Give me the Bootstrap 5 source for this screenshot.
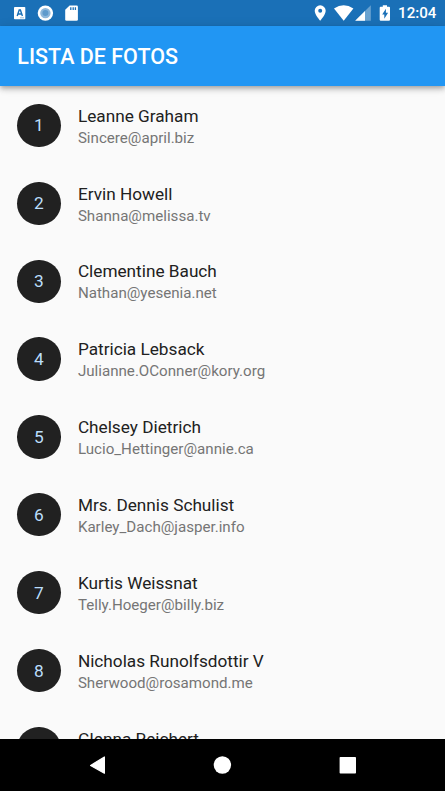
<!DOCTYPE html>
<html lang="es">
<head>
<meta charset="utf-8">
<meta name="viewport" content="width=device-width, initial-scale=1">
<title>Lista de fotos</title>
<link href="https://cdn.jsdelivr.net/npm/bootstrap@5.3.0/dist/css/bootstrap.min.css" rel="stylesheet">
<style>
body{font-family:Roboto,sans-serif;background:#fafafa;color:#212121}
.status-bar{height:26px;background:#1a70b7;color:#fff}
.status-bar svg,.sys-nav svg{display:block;width:100%;height:100%}
.clock{font-size:15.14px;font-weight:500;line-height:27px;padding-right:8.6px}
.app-bar{height:60px;background:#2196f3;padding:2px 17.3px 0;box-shadow:0 2px 4px -1px rgba(0,0,0,.2),0 4px 5px rgba(0,0,0,.14),0 1px 10px rgba(0,0,0,.12);z-index:2}
.app-bar h1{font-size:21.5px;font-weight:500;line-height:26px}
.people{min-height:0;padding-top:.5px}
.person{height:77.88px;padding:0 17.3px;gap:17.3px}
.person-text{padding-top:2.6px}
.avatar{width:43.3px;height:43.3px;padding-top:2px;background:#212121;color:#bbdefb;font-size:17.3px}
.person-name{font-size:17.22px;line-height:22px}
.person-mail{font-size:15.14px;line-height:22px;color:#757575}
.sys-nav{height:52px;background:#000}
</style>
<script src="https://cdn.jsdelivr.net/npm/bootstrap@5.3.0/dist/js/bootstrap.bundle.min.js"></script>
</head>
<body class="vh-100 d-flex flex-column overflow-hidden">
<div class="status-bar flex-shrink-0 position-relative">
<svg viewBox="0 0 445 26" fill="#fff" aria-hidden="true">
<rect x="14" y="7" width="11.3" height="12.3" rx=".8"/>
<path d="M17.2 16l2-6h1.2l2 6M18 14h3.6" fill="none" stroke="#1a70b7" stroke-width="1.4"/>
<path d="M20 17.8h4" stroke="#1a70b7" stroke-width=".6" opacity=".7"/>
<circle cx="45.4" cy="13.1" r="7.7"/><circle cx="45.4" cy="13.1" r="5.2" fill="#8db7db"/><circle cx="45.4" cy="13.1" r="3" fill="#5e9acc"/>
<path d="M69.6 5.4h7q1.3 0 1.3 1.3v12.8q0 1.3-1.3 1.3H66.5q-1.3 0-1.3-1.3V9.7z"/>
<path d="M70.8 7.2v2.7M73.2 7.2v2.7M75.4 7.2v2.7" stroke="#1a70b7" stroke-width="1.3"/>
<path fill-rule="evenodd" d="M320.2 5.3a5.5 5.5 0 0 0-5.5 5.5c0 4.1 5.5 9.9 5.5 9.9s5.5-5.8 5.5-9.9a5.5 5.5 0 0 0-5.5-5.5zm0 3.5a2 2 0 1 1 0 4 2 2 0 0 1 0-4z"/>
<path d="M334 8.6q9.7-6.8 19.4 0L343.7 20.7z"/>
<path d="M370.8 5.2v15.6h-15.6z" opacity=".35"/><path d="M365 11v9.8h-9.8z"/>
<path fill-rule="evenodd" d="M380.7 6.7h2.1V5.2h4.2v1.5h2q1 0 1 1v12.1q0 1-1 1h-8.3q-1 0-1-1V7.7q0-1 1-1zM385.9 8.7l-3.7 5.8h2.1v4.2l3.8-6h-2.2z"/>
</svg>
<span class="clock position-absolute top-0 end-0">12:04</span>
</div>
<header class="app-bar flex-shrink-0 d-flex align-items-center position-relative text-white"><h1 class="m-0">LISTA DE FOTOS</h1></header>
<main class="people flex-grow-1 overflow-hidden">
<ul class="list-unstyled m-0">
<li class="person d-flex align-items-center"><div class="avatar rounded-circle flex-shrink-0 d-flex align-items-center justify-content-center">1</div><div class="person-text"><div class="person-name">Leanne Graham</div><div class="person-mail">Sincere@april.biz</div></div></li>
<li class="person d-flex align-items-center"><div class="avatar rounded-circle flex-shrink-0 d-flex align-items-center justify-content-center">2</div><div class="person-text"><div class="person-name">Ervin Howell</div><div class="person-mail">Shanna@melissa.tv</div></div></li>
<li class="person d-flex align-items-center"><div class="avatar rounded-circle flex-shrink-0 d-flex align-items-center justify-content-center">3</div><div class="person-text"><div class="person-name">Clementine Bauch</div><div class="person-mail">Nathan@yesenia.net</div></div></li>
<li class="person d-flex align-items-center"><div class="avatar rounded-circle flex-shrink-0 d-flex align-items-center justify-content-center">4</div><div class="person-text"><div class="person-name">Patricia Lebsack</div><div class="person-mail">Julianne.OConner@kory.org</div></div></li>
<li class="person d-flex align-items-center"><div class="avatar rounded-circle flex-shrink-0 d-flex align-items-center justify-content-center">5</div><div class="person-text"><div class="person-name">Chelsey Dietrich</div><div class="person-mail">Lucio_Hettinger@annie.ca</div></div></li>
<li class="person d-flex align-items-center"><div class="avatar rounded-circle flex-shrink-0 d-flex align-items-center justify-content-center">6</div><div class="person-text"><div class="person-name">Mrs. Dennis Schulist</div><div class="person-mail">Karley_Dach@jasper.info</div></div></li>
<li class="person d-flex align-items-center"><div class="avatar rounded-circle flex-shrink-0 d-flex align-items-center justify-content-center">7</div><div class="person-text"><div class="person-name">Kurtis Weissnat</div><div class="person-mail">Telly.Hoeger@billy.biz</div></div></li>
<li class="person d-flex align-items-center"><div class="avatar rounded-circle flex-shrink-0 d-flex align-items-center justify-content-center">8</div><div class="person-text"><div class="person-name">Nicholas Runolfsdottir V</div><div class="person-mail">Sherwood@rosamond.me</div></div></li>
<li class="person d-flex align-items-center"><div class="avatar rounded-circle flex-shrink-0"></div><div class="person-text"><div class="person-name">Glenna Reichert</div><div class="person-mail">&nbsp;</div></div></li>
</ul>
</main>
<nav class="sys-nav flex-shrink-0">
<svg viewBox="0 0 445 52" fill="#fff" aria-hidden="true">
<path d="M90.6 26.4L104.4 18v16.2z" stroke="#fff" stroke-width="1.2" stroke-linejoin="round"/>
<circle cx="222.4" cy="26" r="8.7"/>
<rect x="339.6" y="18" width="16.4" height="16.5" rx=".8"/>
</svg>
</nav>
</body>
</html>
